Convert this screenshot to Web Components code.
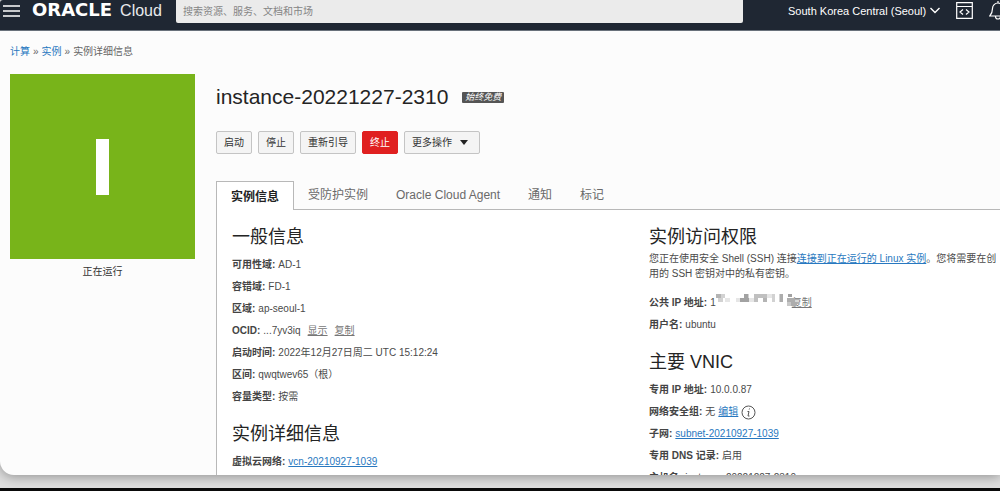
<!DOCTYPE html>
<html lang="zh-CN">
<head>
<meta charset="utf-8">
<title>实例详细信息</title>
<style>
html, body { margin: 0; height: 100%; }
body {
  display: flex; flex-direction: column; overflow: hidden; background: #0a0a0a;
  font: 10px/22px "Liberation Sans", "Noto Sans CJK SC", sans-serif; color: #4a4a4a;
  --link: #2878c0; --ink: #242424; --line: #b8b8b8;
}
</style>
</head>
<body>
<cloud-window>
  <cloud-header slot="header"></cloud-header>
  <crumb-trail slot="crumbs"></crumb-trail>
  <instance-status slot="side">正在运行</instance-status>
  <instance-title>instance-20221227-2310</instance-title>
  <action-bar></action-bar>
  <tab-strip></tab-strip>
  <detail-panel></detail-panel>
</cloud-window>

<script>
const define = (name, html) => customElements.define(name, class extends HTMLElement {
  constructor() {
    super();
    const t = document.createElement('template');
    t.innerHTML = html;
    this.attachShadow({ mode: 'open' }).append(t.content.cloneNode(true));
  }
});

define('cloud-window', `
<style>
:host { display: flex; flex: 1; min-height: 0; flex-direction: column; box-sizing: border-box; padding-bottom: 13px; margin-bottom: 3px; background: #dedede; }
.window { flex: 1; min-height: 0; display: flex; flex-direction: column; overflow: hidden; background: #fcfcfc; border-radius: 3px 0 0 14px; box-shadow: 0 2px 12px #00000055; }
.body { flex: 1; min-height: 0; display: grid; grid-template-columns: 185px minmax(0, 1fr); column-gap: 21px; padding-left: 10px; }
main { display: flex; flex-direction: column; min-width: 0; min-height: 0; }
</style>
<div class="window">
  <slot name="header"></slot>
  <slot name="crumbs"></slot>
  <div class="body">
    <slot name="side"></slot>
    <main><slot></slot></main>
  </div>
</div>`);

define('cloud-header', `
<style>
:host { display: block; flex: none; }
header { display: flex; align-items: center; height: 23px; padding: 0 0 7px 3px; background: #1f2733; border-bottom: 1px solid #69717b; color: #fff; overflow: hidden; }
button { display: flex; flex: none; align-items: center; padding: 0; border: 0; background: none; color: inherit; font: inherit; font-size: 11px; }
svg { display: block; fill: none; stroke: currentColor; }
.brand { display: flex; flex: none; align-items: baseline; gap: 8px; width: 144px; margin-left: 12px; padding-bottom: 2px; color: #e8eaec; text-decoration: none; font-size: 16px; }
.brand b { font: bold 18px "DejaVu Sans", sans-serif; color: #fff; }
.menu { padding-bottom: 2px; }
input { flex: 1; min-width: 0; height: 23px; box-sizing: border-box; padding: 0 7px; border: 0; border-radius: 0 0 2px 2px; background: #ebebeb; font: inherit; color: #333; }
input::placeholder { color: #858585; opacity: 1; }
.tools { display: flex; flex: none; align-items: center; gap: 16px; width: 212px; margin-left: 45px; padding-bottom: 2px; }
.region { gap: 4px; white-space: nowrap; }
</style>
<header>
  <button class="menu" aria-label="菜单"><svg width="17" height="12"><path d="M0 1h17M0 6h17M0 11h17" stroke-width="1.5"/></svg></button>
  <a class="brand" href="#"><b>ORACLE</b><span>Cloud</span></a>
  <input type="search" aria-label="搜索" placeholder="搜索资源、服务、文档和市场">
  <div class="tools">
    <button class="region">South Korea Central (Seoul)<svg width="10" height="7"><path d="M0.5 1l4.5 4.5L9.500 1" stroke-width="1.4"/></svg></button>
    <button aria-label="开发人员工具"><svg width="17" height="17"><path d="M.7.7h15.600v15.600H.7zM.7 4.500h15.600M7 7.500L4 10l3 2.500M10 7.500l3 2.500-3 2.500" stroke-width="1.2"/></svg></button>
    <button aria-label="公告"><svg width="18" height="19"><path d="M.8 15c2.200-2.500 2.700-4.500 2.700-7.500a5.500 5.500 0 0 1 11 0c0 3 .5 5 2.700 7.500zM6.500 15.500a2.500 2.500 0 0 0 5 0M9 0v2" stroke-width="1.2"/></svg></button>
  </div>
</header>`);

define('crumb-trail', `
<style>
:host { display: block; flex: none; padding: 10px 10px 11px; }
nav { display: flex; gap: 3px; color: #666; }
a { color: var(--link); text-decoration: none; }
</style>
<nav aria-label="位置"><a href="#">计算</a><span>»</span><a href="#">实例</a><span>»</span><span>实例详细信息</span></nav>`);

define('instance-status', `
<style>
:host { display: flex; flex-direction: column; align-items: center; gap: 2px; color: #333; }
.tile { display: grid; place-items: center; width: 100%; aspect-ratio: 1; background: #78b41a; }
.bar { width: 13px; height: 56px; background: #fff; }
</style>
<div class="tile"><div class="bar"></div></div><slot></slot>`);

define('instance-title', `
<style>
:host { display: flex; align-items: center; gap: 14px; height: 46px; flex: none; }
h1 { margin: 0; font-size: 21px; font-weight: 400; color: var(--ink); }
span { padding: 0 3px; background: #555; color: #fff; font-size: 9px; font-style: italic; line-height: 11px; border-radius: 1px; }
</style>
<h1><slot></slot></h1><span>始终免费</span>`);

define('action-bar', `
<style>
:host { display: flex; flex: none; gap: 6px; padding: 11px 0 27px; }
button { height: 23px; padding: 0 7px; border: 1px solid #c4c4c4; border-radius: 2px; background: #f4f4f4; font: inherit; line-height: 20px; color: #333; }
.danger { background: #e02020; border-color: #e02020; color: #fff; }
.more { display: flex; align-items: center; gap: 8px; padding-right: 11px; }
</style>
<button>启动</button><button>停止</button><button>重新引导</button><button class="danger">终止</button>
<button class="more">更多操作<svg width="8" height="5"><path d="M0 0h8L4 5z" fill="#222"/></svg></button>`);

define('tab-strip', `
<style>
:host { display: flex; flex: none; border-bottom: 1px solid var(--line); height: 28px; font-size: 12px; }
button { padding: 0 14px; border: 0; background: none; font: inherit; color: #6a6a6a; white-space: nowrap; }
button[aria-selected=true] { box-sizing: border-box; height: 30px; border: 1px solid var(--line); border-bottom: 0; background: #fff; font-weight: 600; color: #222; }
</style>
<button role="tab" aria-selected="true">实例信息</button><button role="tab">受防护实例</button><button role="tab">Oracle Cloud Agent</button><button role="tab">通知</button><button role="tab">标记</button>`);

define('detail-row', `
<style>
:host { display: flex; align-items: center; gap: 3px; height: 22px; white-space: nowrap; }
b { font-weight: 600; color: #444; }
</style>
<b><slot name="label"></slot></b><slot></slot>`);

define('detail-panel', `
<style>
:host { display: grid; flex: 1; min-height: 0; overflow: hidden; grid-template-columns: 417px minmax(0, 1fr); padding: 15px 0 0 15px; background: #fff; border-left: 1px solid var(--line); }
h2 { margin: 0 0 5px; font-size: 18px; font-weight: 400; line-height: 24px; color: var(--ink); }
section + section { margin-top: 14px; }
p { margin: 0 0 11px; line-height: 15px; white-space: nowrap; }
a { color: var(--link); }
.quiet { color: #777; margin-left: 4px; }
svg { display: block; }
.masked { display: flex; align-items: center; }
.masked .quiet { margin: 0; }
.masked svg { position: relative; overflow: visible; }
.access h2 { margin-bottom: 2px; }
</style>
<div>
  <section>
    <h2>一般信息</h2>
    <detail-row><span slot="label">可用性域:</span>AD-1</detail-row>
    <detail-row><span slot="label">容错域:</span>FD-1</detail-row>
    <detail-row><span slot="label">区域:</span>ap-seoul-1</detail-row>
    <detail-row><span slot="label">OCID:</span>...7yv3iq <a class="quiet" href="#">显示</a> <a class="quiet" href="#">复制</a></detail-row>
    <detail-row><span slot="label">启动时间:</span>2022年12月27日周二 UTC 15:12:24</detail-row>
    <detail-row><span slot="label">区间:</span>qwqtwev65（根）</detail-row>
    <detail-row><span slot="label">容量类型:</span>按需</detail-row>
  </section>
  <section>
    <h2>实例详细信息</h2>
    <detail-row><span slot="label">虚拟云网络:</span><a href="#">vcn-20210927-1039</a></detail-row>
  </section>
</div>
<div>
  <section class="access">
    <h2>实例访问权限</h2>
    <p>您正在使用安全 Shell (SSH) 连接<a href="#">连接到正在运行的 Linux 实例</a>。您将需要在创<br>用的 SSH 密钥对中的私有密钥。</p>
    <detail-row><span slot="label">公共 IP 地址:</span><span class="masked">1<svg width="76" height="18" aria-hidden="true">
      <path fill="#b4b4b4" d="M0 0h5v4H0zM47 4h4v4h-4zM72 4h4v4h-4z"/>
      <path fill="#d2d2d2" d="M2 4h5v4H2zM5 0h4v4H5zM28 0h5v4h-5zM56 0h3v8h-3zM63 0h4v8h-4z"/>
      <path fill="#e6e6e6" d="M9 4h5v4H9zM20 4h4v4h-4zM33 4h5v4h-5zM51 0h5v4h-5z"/>
      <path fill="#a2a2a2" d="M28 0h4v4h-4zM24 4h9v4h-9zM72 0h4v3h-4z"/>
      <path fill="#c0c0c0" d="M38 0h13v4H38zM38 4h4v4h-4z"/>
      <path fill="#adadad" d="M71 4h8v4h-8zM75 8h6v4h-6zM64 0h3v8h-3z"/>
      <path fill="#c8c8c8" d="M71 8h4v4h-4z"/>
    </svg><a class="quiet" href="#">复制</a></span></detail-row>
    <detail-row><span slot="label">用户名:</span>ubuntu</detail-row>
  </section>
  <section>
    <h2>主要 VNIC</h2>
    <detail-row><span slot="label">专用 IP 地址:</span>10.0.0.87</detail-row>
    <detail-row><span slot="label">网络安全组:</span>无 <a href="#">编辑</a> <svg width="15" height="15" fill="none" stroke="#555"><circle cx="7.500" cy="7.500" r="6.500"/><path d="M8.500 3.500l-.3 1M6.500 6.500h1.500l-1 4.500h1.500"/></svg></detail-row>
    <detail-row><span slot="label">子网:</span><a href="#">subnet-20210927-1039</a></detail-row>
    <detail-row><span slot="label">专用 DNS 记录:</span>启用</detail-row>
    <detail-row><span slot="label">主机名:</span>instance-20221227-2310</detail-row>
  </section>
</div>`);
</script>
</body>
</html>
